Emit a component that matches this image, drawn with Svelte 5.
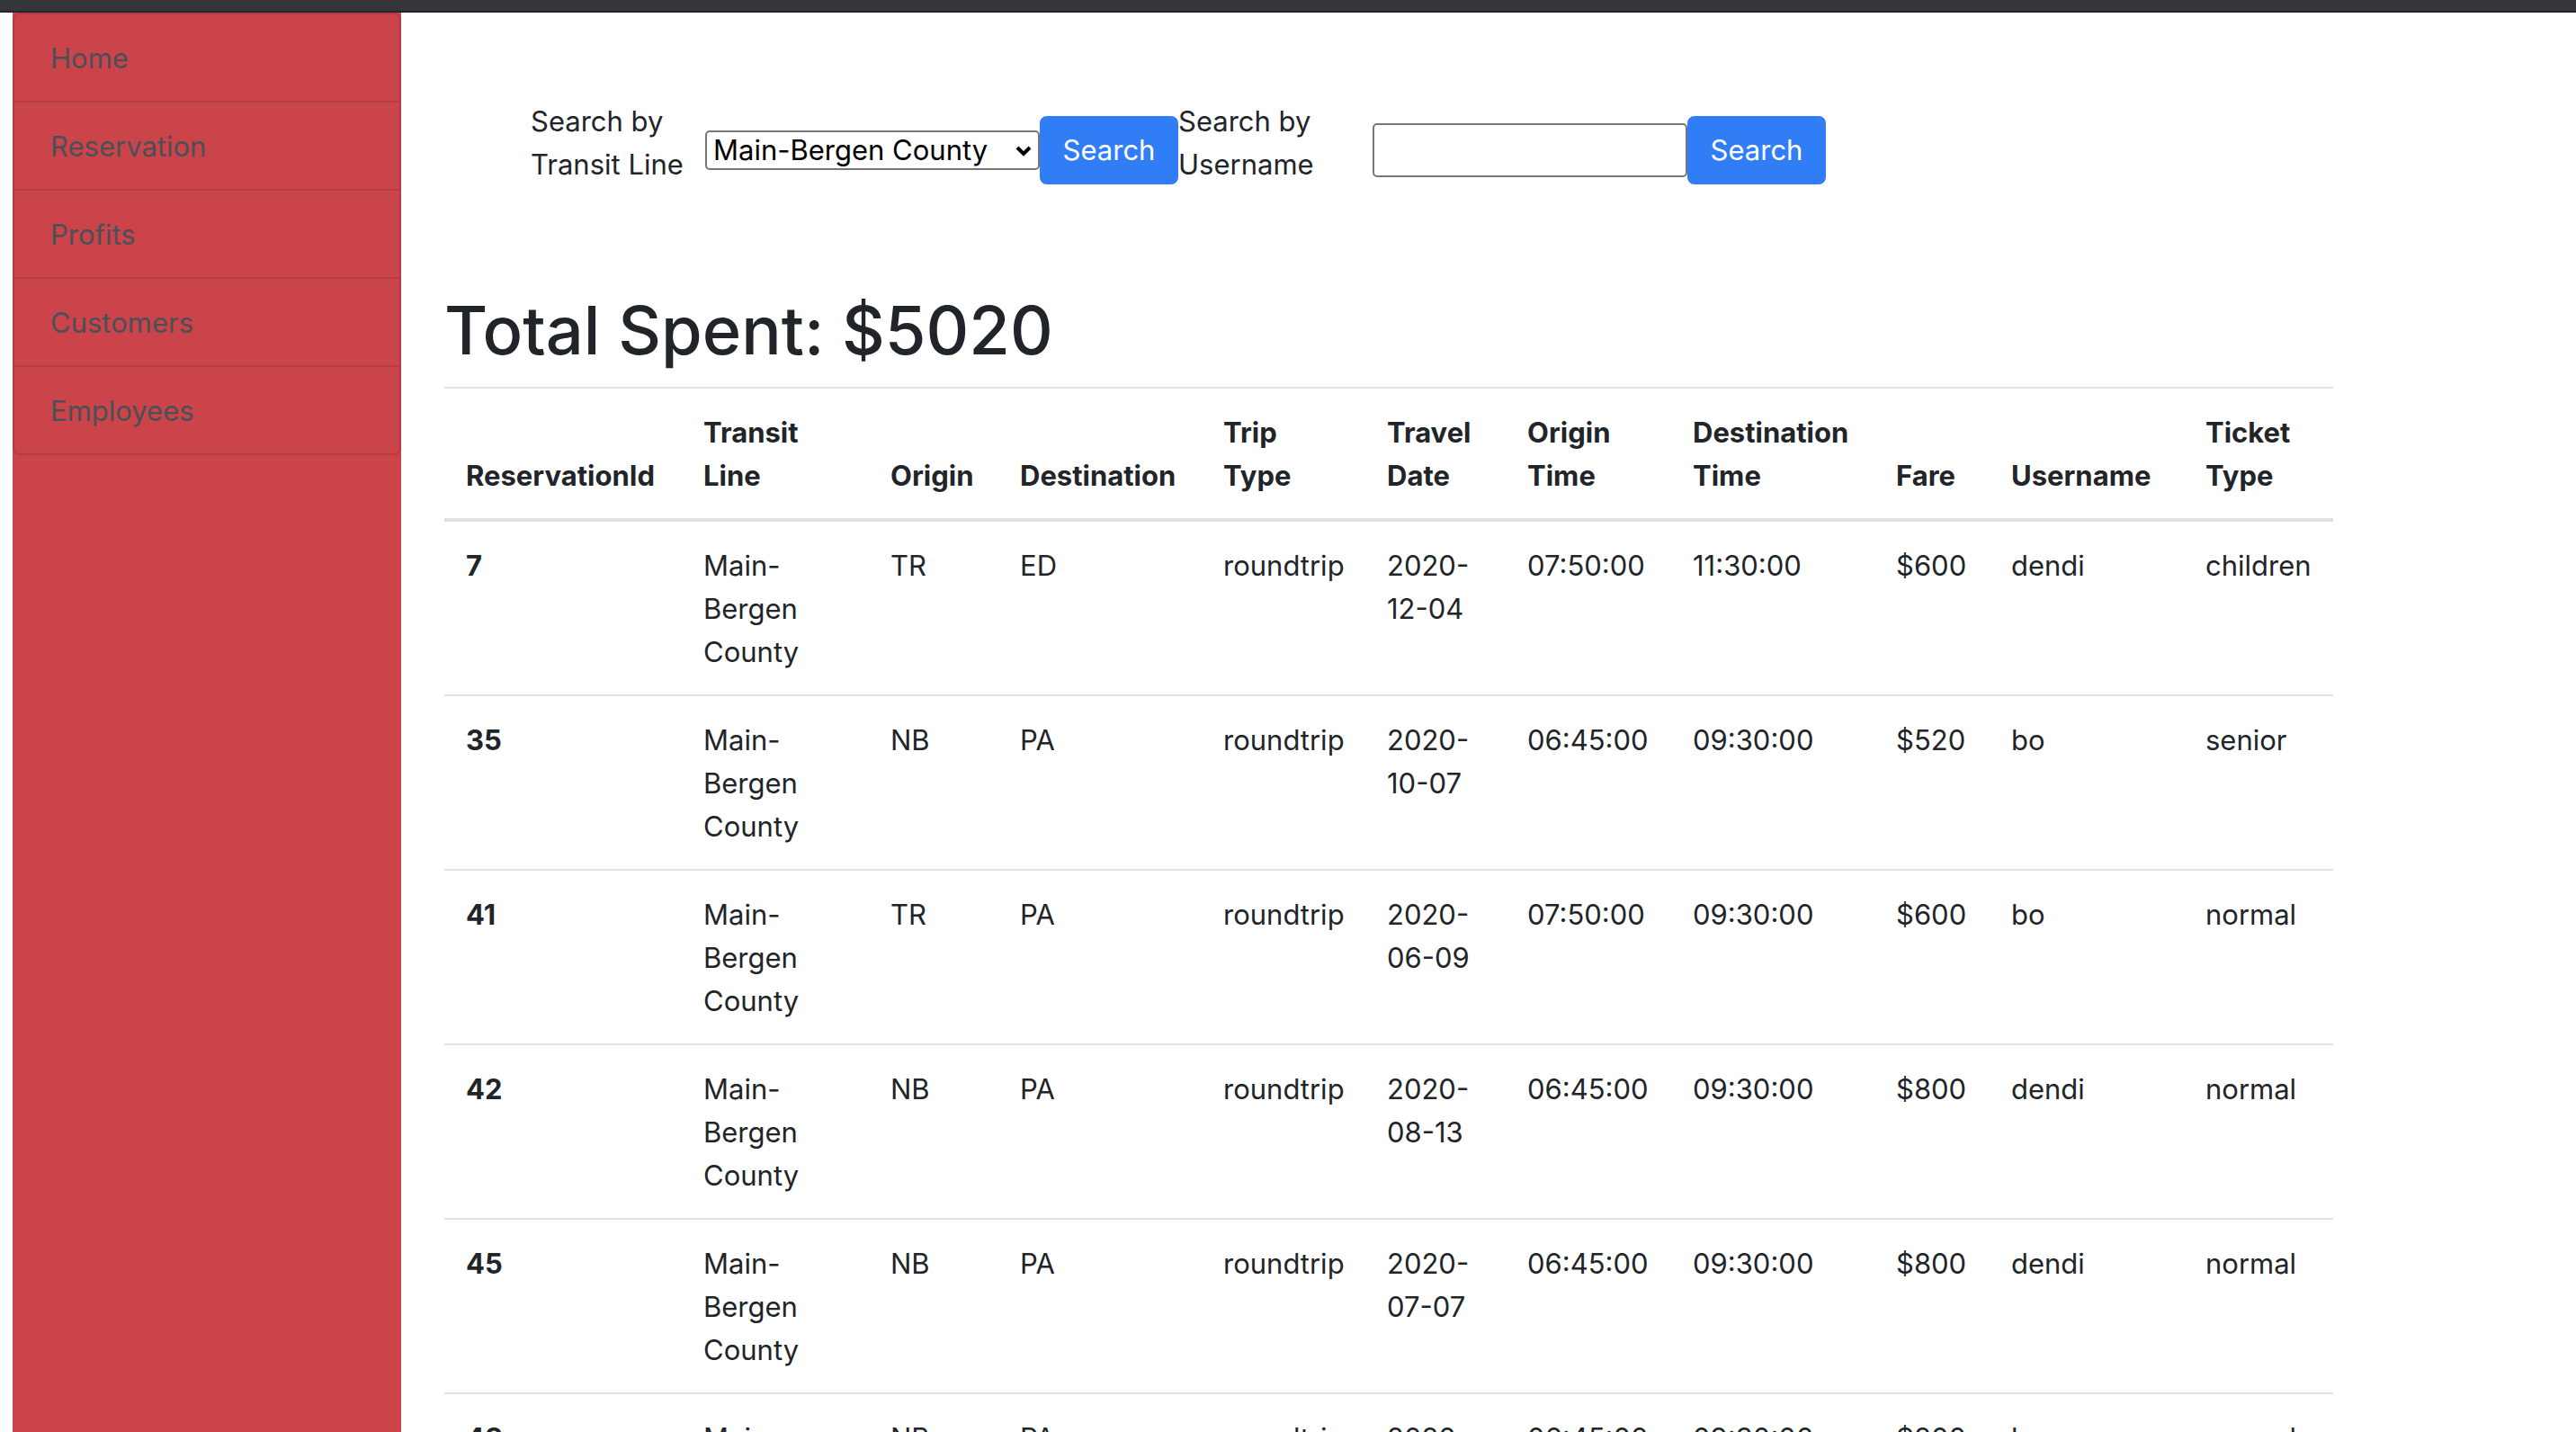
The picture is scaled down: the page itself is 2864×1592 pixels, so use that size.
<script>
  const links = ['Home', 'Reservation', 'Profits', 'Customers', 'Employees'];

  const columns = [
    { label: 'ReservationId', width: 264 },
    { label: 'Transit Line', width: 208 },
    { label: 'Origin', width: 144 },
    { label: 'Destination', width: 226 },
    { label: 'Trip Type', width: 182 },
    { label: 'Travel Date', width: 156 },
    { label: 'Origin Time', width: 184 },
    { label: 'Destination Time', width: 226 },
    { label: 'Fare', width: 128 },
    { label: 'Username', width: 216 },
    { label: 'Ticket Type', width: 166 },
  ];

  const reservations = [
    { id: 7, line: 'Main-Bergen County', origin: 'TR', destination: 'ED', trip: 'roundtrip', date: '2020-12-04', originTime: '07:50:00', destinationTime: '11:30:00', fare: 600, username: 'dendi', ticket: 'children' },
    { id: 35, line: 'Main-Bergen County', origin: 'NB', destination: 'PA', trip: 'roundtrip', date: '2020-10-07', originTime: '06:45:00', destinationTime: '09:30:00', fare: 520, username: 'bo', ticket: 'senior' },
    { id: 41, line: 'Main-Bergen County', origin: 'TR', destination: 'PA', trip: 'roundtrip', date: '2020-06-09', originTime: '07:50:00', destinationTime: '09:30:00', fare: 600, username: 'bo', ticket: 'normal' },
    { id: 42, line: 'Main-Bergen County', origin: 'NB', destination: 'PA', trip: 'roundtrip', date: '2020-08-13', originTime: '06:45:00', destinationTime: '09:30:00', fare: 800, username: 'dendi', ticket: 'normal' },
    { id: 45, line: 'Main-Bergen County', origin: 'NB', destination: 'PA', trip: 'roundtrip', date: '2020-07-07', originTime: '06:45:00', destinationTime: '09:30:00', fare: 800, username: 'dendi', ticket: 'normal' },
    { id: 48, line: 'Main-Bergen County', origin: 'NB', destination: 'PA', trip: 'roundtrip', date: '2020-08-08', originTime: '06:45:00', destinationTime: '09:30:00', fare: 800, username: 'bo', ticket: 'normal' },
  ];

  const total = 5020;

  let transitLine = $state('Main-Bergen County');
  let username = $state('');
</script>

<div class="page">
  <div class="topbar"></div>
  <div class="layout">
    <nav class="sidebar">
      <div class="list-group">
        {#each links as link}
          <a class="list-item" href="#{link.toLowerCase()}">{link}</a>
        {/each}
      </div>
    </nav>

    <main>
      <div class="search">
        <form onsubmit={(e) => e.preventDefault()}>
          <label class="line-label" for="line">Search by Transit Line</label>
          <div class="select">
            <select id="line" bind:value={transitLine}>
              <option>Main-Bergen County</option>
            </select>
            <svg viewBox="0 0 20 14" aria-hidden="true"><path d="M3 3 L10 10 L17 3" /></svg>
          </div>
          <button type="submit">Search</button>
        </form>
        <form onsubmit={(e) => e.preventDefault()}>
          <label class="user-label" for="username">Search by Username</label>
          <input id="username" type="text" bind:value={username} />
          <button type="submit">Search</button>
        </form>
      </div>

      <h1>Total Spent: ${total}</h1>

      <table>
        <colgroup>
          {#each columns as col}
            <col style="width: {col.width}px" />
          {/each}
        </colgroup>
        <thead>
          <tr>
            {#each columns as col}
              <th scope="col">{col.label}</th>
            {/each}
          </tr>
        </thead>
        <tbody>
          {#each reservations as r}
            <tr>
              <th scope="row">{r.id}</th>
              <td>{r.line}</td>
              <td>{r.origin}</td>
              <td>{r.destination}</td>
              <td>{r.trip}</td>
              <td>{r.date}</td>
              <td>{r.originTime}</td>
              <td>{r.destinationTime}</td>
              <td>${r.fare}</td>
              <td>{r.username}</td>
              <td>{r.ticket}</td>
            </tr>
          {/each}
        </tbody>
      </table>
    </main>
  </div>
</div>

<style>
  :global(body) { background: #fff; }
  .page {
    height: 100vh; overflow: hidden; display: flex; flex-direction: column;
    font-family: Inter, "Liberation Sans", sans-serif; font-size: 31px;
    line-height: 48px; color: #212529;
  }
  .topbar { height: 12px; flex-shrink: 0; background: #35363a; border-bottom: 2px solid #252528; }
  .layout { flex: 1; min-height: 0; display: flex; padding-left: 14px; }

  .sidebar { width: 432px; flex-shrink: 0; background: #cb444a; }
  .list-group { border: 2px solid #b43c42; border-radius: 8px; }
  .list-item { display: block; padding: 25px 40px 23px; color: #495057; text-decoration: none; }
  .list-item + .list-item { border-top: 2px solid #b43c42; }

  main { flex: 1; max-width: 2100px; min-width: 0; padding: 97px 48px 0; }
  .search { display: flex; padding-left: 96px; margin-bottom: 96px; }
  form { display: flex; align-items: center; }
  label { margin-bottom: 16px; }
  .line-label { width: 194px; }
  .user-label { width: 216px; }
  .select { position: relative; width: 372px; display: flex; }
  select, input {
    box-sizing: border-box; font: inherit; color: #000; background: #fff;
    border: 2px solid #767676; border-radius: 5px;
  }
  select { appearance: none; width: 100%; height: 44px; line-height: 40px; padding: 0 32px 0 7px; }
  .select svg {
    position: absolute; right: 8px; top: 16px; width: 20px; height: 14px;
    fill: none; stroke: #000; stroke-width: 4; pointer-events: none;
  }
  input { width: 350px; height: 60px; padding: 2px 4px; }
  button {
    font: inherit; color: #fff; background: #307df6; border: 2px solid #307df6;
    border-radius: 8px; width: 154px; height: 76px; padding: 0; cursor: pointer;
  }

  h1 { font-size: 74px; font-weight: 500; line-height: 96px; margin: 0 0 15px; }

  table { width: 100%; table-layout: fixed; border-spacing: 0; }
  th, td { padding: 25px 24px 23px; text-align: left; vertical-align: top; border-bottom: 2px solid #dee2e6; }
  th { font-weight: 700; }
  thead th { vertical-align: bottom; border-top: 2px solid #dee2e6; border-bottom-width: 4px; }
</style>
